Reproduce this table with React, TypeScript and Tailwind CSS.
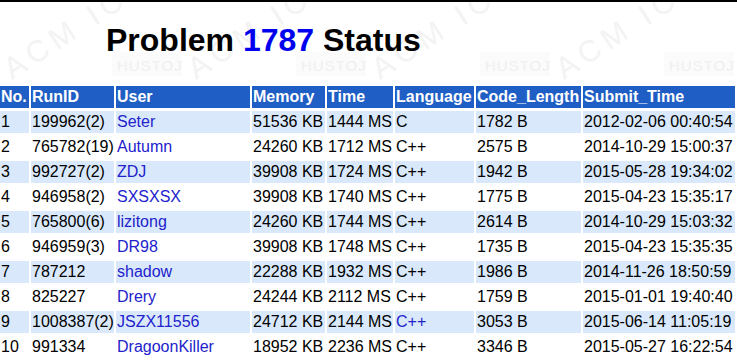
import React from "react";

type Row = {
  no: number;
  runId: string;
  user: string;
  memory: string;
  time: string;
  lang: string;
  langLink?: boolean;
  len: string;
  submit: string;
};

const rows: Row[] = [
  { no: 1, runId: "199962(2)", user: "Seter", memory: "51536 KB", time: "1444 MS", lang: "C", len: "1782 B", submit: "2012-02-06 00:40:54" },
  { no: 2, runId: "765782(19)", user: "Autumn", memory: "24260 KB", time: "1712 MS", lang: "C++", len: "2575 B", submit: "2014-10-29 15:00:37" },
  { no: 3, runId: "992727(2)", user: "ZDJ", memory: "39908 KB", time: "1724 MS", lang: "C++", len: "1942 B", submit: "2015-05-28 19:34:02" },
  { no: 4, runId: "946958(2)", user: "SXSXSX", memory: "39908 KB", time: "1740 MS", lang: "C++", len: "1775 B", submit: "2015-04-23 15:35:17" },
  { no: 5, runId: "765800(6)", user: "lizitong", memory: "24260 KB", time: "1744 MS", lang: "C++", len: "2614 B", submit: "2014-10-29 15:03:32" },
  { no: 6, runId: "946959(3)", user: "DR98", memory: "39908 KB", time: "1748 MS", lang: "C++", len: "1735 B", submit: "2015-04-23 15:35:35" },
  { no: 7, runId: "787212", user: "shadow", memory: "22288 KB", time: "1932 MS", lang: "C++", len: "1986 B", submit: "2014-11-26 18:50:59" },
  { no: 8, runId: "825227", user: "Drery", memory: "24244 KB", time: "2112 MS", lang: "C++", len: "1759 B", submit: "2015-01-01 19:40:40" },
  { no: 9, runId: "1008387(2)", user: "JSZX11556", memory: "24712 KB", time: "2144 MS", lang: "C++", langLink: true, len: "3053 B", submit: "2015-06-14 11:05:19" },
  { no: 10, runId: "991334", user: "DragoonKiller", memory: "18952 KB", time: "2236 MS", lang: "C++", len: "3346 B", submit: "2015-05-27 16:22:54" },
];

const headers = ["No.", "RunID", "User", "Memory", "Time", "Language", "Code_Length", "Submit_Time"];

function WatermarkBackground() {
  const tiles = [0, 184, 368, 552];
  return (
    <svg className="pointer-events-none absolute left-0 top-0" width="737" height="86" aria-hidden="true">
      {tiles.map((x) => (
        <g key={x} transform={`translate(${x},0)`}>
          <text
            x="0"
            y="0"
            transform="translate(12,80) rotate(-33)"
            fontFamily="Liberation Sans, Arial, sans-serif"
            fontSize="30"
            letterSpacing="6"
            fill="#f3f3f3"
          >
            ACM ICPC
          </text>
          <rect x="112" y="52" width="70" height="24" fill="#fbfbfb" />
          <text
            x="117"
            y="71"
            fontFamily="Liberation Sans, Arial, sans-serif"
            fontSize="15"
            letterSpacing="1"
            fill="#f0f0f0"
          >
            HUSTOJ
          </text>
        </g>
      ))}
    </svg>
  );
}

export default function App() {
  return (
    <div
      className="relative h-[360px] w-[737px] overflow-hidden bg-white text-black"
      style={{ fontFamily: '"Liberation Sans", Arial, sans-serif' }}
    >
      <WatermarkBackground />
      <div className="relative border-t-2 border-black">
        <h1 className="h-[84px] pl-[106px] pt-[20px] text-[32px] font-bold leading-[37px]">
          Problem <span className="text-[#0000ee]">1787</span> Status
        </h1>
        <div className="grid grid-cols-[29px_83px_134px_73px_66px_79px_105px_152px] gap-x-[2px] gap-y-[3px] text-[16px]">
          {headers.map((h) => (
            <div key={h} className="flex h-[22px] items-center bg-[#1f5ec4] pl-[1px] font-bold text-white">
              {h}
            </div>
          ))}
          {rows.map((r) => {
            const bg = r.no % 2 === 1 ? "bg-[#d9e9fb]" : "bg-white";
            const cell = `flex h-[22px] items-center whitespace-nowrap pl-[1px] ${bg}`;
            return (
              <React.Fragment key={r.no}>
                <div className={cell}>{r.no}</div>
                <div className={cell}>{r.runId}</div>
                <div className={cell}>
                  <span className="text-[#2222cc]">{r.user}</span>
                </div>
                <div className={cell}>{r.memory}</div>
                <div className={cell}>{r.time}</div>
                <div className={cell}>
                  <span className={r.langLink ? "text-[#2222cc]" : ""}>{r.lang}</span>
                </div>
                <div className={cell}>{r.len}</div>
                <div className={cell}>{r.submit}</div>
              </React.Fragment>
            );
          })}
        </div>
      </div>
    </div>
  );
}
